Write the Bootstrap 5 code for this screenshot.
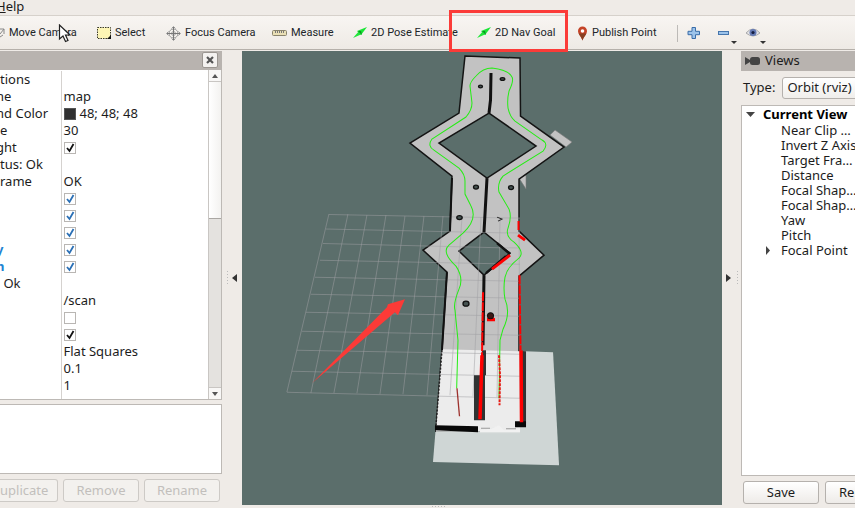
<!DOCTYPE html>
<html lang="en">
<head>
<meta charset="utf-8">
<meta name="viewport" content="width=device-width, initial-scale=1">
<title>RViz</title>
<link href="https://cdn.jsdelivr.net/npm/bootstrap@5.3.0/dist/css/bootstrap.min.css" rel="stylesheet">
<style>
body{font-family:"Noto Sans","Open Sans",sans-serif;font-size:13px;line-height:17px;color:#1c1c1c;background:#efebe7}
button,select{color:inherit}
.menubar{height:15px;line-height:13px;text-indent:-4px}
.menubar a{color:inherit}
.toolbar{height:36px;padding-top:2px;border-top:1px solid #d6d1cb;border-bottom:1px solid #b5b0aa;background:linear-gradient(#f8f5f2,#eeeae5);grid-template-columns:97px 69px 106px 81px 124px 100px 100px 10px 31px 28px 1fr}
.tool{font-family:Roboto,"Open Sans",sans-serif;font-size:11px;line-height:16px;gap:4px;white-space:nowrap}
.tool svg{flex:none}
.tool-sep{height:17px}
.cursor{left:58px;top:8px;z-index:3}
.highlight{left:-28px;top:-15px;width:119px;height:42px;border:3px solid #fb3b38;z-index:2}
.work{padding-top:1px}
.left-dock{width:222px;padding-bottom:3px}
.right-dock{width:114px}
.splitter{width:20px}
.splitter-right{width:19px}
.dock-title{height:20px;background:#b8b3af}
.views-title{gap:5px}
.close-btn{width:16px;height:16px;background:#f4f2f0;border:1px solid #9b9691;border-radius:2px}
.pane{background:#fff;border:1px solid #bdb9b5}
.props{table-layout:fixed;width:100%;margin-top:1px}
.props td{height:17px;padding:0 0 0 2px;white-space:nowrap;overflow:hidden}
.props td:first-child{width:61px;padding:0;border-right:1px solid #d5d2cf}
.props tr{height:17px}
.props .cut-name{text-indent:-4px}
.swatch{width:12px;height:12px;background:#303030;border:1px solid #555}
.tick{appearance:none;display:block;width:12px;height:12px;margin:0;background:#fff;border:1px solid #b9b6b3}
.tick:checked{background:#fff url("data:image/svg+xml,%3Csvg xmlns='http://www.w3.org/2000/svg' viewBox='0 0 10 10'%3E%3Cpath d='M2 5l2.5 3L8.5 1' fill='none' stroke='%23111' stroke-width='1.8'/%3E%3C/svg%3E")}
.tick.blue:checked{background-image:url("data:image/svg+xml,%3Csvg xmlns='http://www.w3.org/2000/svg' viewBox='0 0 10 10'%3E%3Cpath d='M2 5l2.5 3L8.5 1' fill='none' stroke='%232a6fb5' stroke-width='1.8'/%3E%3C/svg%3E")}
.blue-name{color:#2283d2;font-weight:700}
.scroller{width:13px;background:#e4e2df;border-left:1px solid #c9c6c3}
.scroll-btn{height:12px;background:#f8f7f6;border-bottom:1px solid #c9c6c3}
.scroll-btn.down{border-top:1px solid #c9c6c3;border-bottom:0}
.thumb{height:137px;background:linear-gradient(90deg,#fff,#f3f2f0);border-bottom:1px solid #aaa7a3}
.help-box{height:70px;margin-top:4px}
.cmd{width:76px;height:23px;flex:none;border:1px solid #b5b1ad;border-radius:3px;background:linear-gradient(#fff,#eeebe8);text-align:center}
.cmd.wide{width:110px;text-align:left;padding-left:13px}
.cmd:disabled{color:#c2bfbc;border-color:#cdcac6;background:#f3f1ee}
.cmd.cut{width:58px;text-align:left;border-left:0;border-radius:0 3px 3px 0}
.left-cmds{gap:5px;padding-top:5px}
.right-cmds{gap:6px;padding:5px 0 1px 2px}
.type-row{padding:6px 0 0 2px;gap:7px}
.type-select{width:120px;height:22px;flex:none;border:1px solid #b5b1ad;border-radius:3px;background:linear-gradient(#fff,#f0eeeb);appearance:none;padding:0 4px}
.views-tree{margin-top:6px;padding-top:1px;border-right:0}
.views-tree li{height:15px;line-height:15px;white-space:nowrap;padding-left:39px;position:relative}
.views-tree li.top{padding-left:21px;font-weight:700;color:#000;height:16px}
.views-tree svg{position:absolute;left:4px;top:5px}
.views-tree .nested{left:23px;top:3px}
.view3d{background:#5b6e6b}
.statusbar{height:3px}
</style>
</head>
<body class="d-flex flex-column vh-100 overflow-hidden">
<nav class="menubar overflow-hidden"><a href="#" class="text-decoration-none"><u>H</u>elp</a></nav>

<div class="toolbar d-grid align-items-center position-relative" role="toolbar">
  <button class="tool btn p-0 border-0 d-flex align-items-center rounded-0" type="button">
    <svg width="5" height="14"><path d="M0 3h4v5M4 3L0 8M0 11l3-2" fill="none" stroke="#888"/></svg>Move Camera</button>
  <button class="tool btn p-0 border-0 d-flex align-items-center rounded-0" type="button">
    <svg width="14" height="14"><path d="M.5 1.500h13v11H.5z" fill="#fdf5b5" stroke="#3a3a2a" stroke-dasharray="1.500 1"/><path d="M14 9v4h-4z" fill="#111"/></svg>Select</button>
  <button class="tool btn p-0 border-0 d-flex align-items-center rounded-0" type="button">
    <svg width="15" height="15" fill="none" stroke="#777"><circle cx="7.500" cy="7.500" r="4.500" stroke="#999"/><circle cx="7.500" cy="7.500" r="2" stroke="#aaa"/><path d="M7.500 1v13M1 7.500h13"/><path d="M5.500 2.500l2-2 2 2M5.500 12.500l2 2 2-2M2.500 5.500l-2 2 2 2M12.500 5.500l2 2-2 2" stroke="#999"/></svg>Focus Camera</button>
  <button class="tool btn p-0 border-0 d-flex align-items-center rounded-0" type="button">
    <svg width="15" height="14"><rect x=".5" y="4.500" width="14" height="5" rx="1" fill="#e9dfb5" stroke="#8a846c"/><path d="M3.500 5v2M5.500 5v2M7.500 5v2M9.500 5v2M11.500 5v2" stroke="#777"/></svg>Measure</button>
  <button class="tool btn p-0 border-0 d-flex align-items-center rounded-0" type="button">
    <svg width="14" height="14"><path d="M0 12L6 5l3 3z" fill="#21e63b"/><path d="M4 5l10-4-6 8z" fill="#19e535"/><path d="M5 5l4 4-1-4z" fill="#0a9420"/></svg>2D Pose Estimate</button>
  <div class="position-relative">
    <button class="tool btn p-0 border-0 d-flex align-items-center rounded-0" type="button">
      <svg width="14" height="14"><path d="M0 12L6 5l3 3z" fill="#21e63b"/><path d="M4 5l10-4-6 8z" fill="#19e535"/><path d="M5 5l4 4-1-4z" fill="#0a9420"/></svg>2D Nav Goal</button>
    <div class="highlight position-absolute"></div>
  </div>
  <button class="tool btn p-0 border-0 d-flex align-items-center rounded-0" type="button">
    <svg width="11" height="15"><path d="M5.500 14.500C4 10.500 1 8 1 5a4.500 4.500 0 0 1 9 0c0 3-3 5.500-4.500 9.500z" fill="#c44327"/><path d="M5.500 14.500C4.500 11 2.500 9 1.600 7.500h7.800C8 10 6.500 11 5.500 14.500z" fill="#874022"/><circle cx="5.500" cy="5" r="1.800" fill="#fff"/></svg>Publish Point</button>
  <div class="vr tool-sep align-self-center"></div>
  <button class="tool btn p-0 border-0 d-flex align-items-center rounded-0" type="button" aria-label="Add tool">
    <svg width="14" height="14"><path d="M5 1.500h3.500v3.800h4v3.400h-4v3.800H5V8.700H1V5.300h4z" fill="#9cc3ea" stroke="#3a6da8"/></svg></button>
  <button class="tool btn p-0 border-0 d-flex align-items-center rounded-0" type="button" aria-label="Remove tool">
    <svg width="20" height="22"><rect x=".5" y="9.500" width="10" height="3" fill="#9cc3ea" stroke="#4676ad"/><path d="M13 19h6l-3 3z" fill="#333"/></svg></button>
  <button class="tool btn p-0 border-0 d-flex align-items-center rounded-0" type="button" aria-label="Visibility">
    <svg width="20" height="22"><path d="M0 11Q7 3 14 11Q7 17 0 11z" fill="#e3e3e5" stroke="#a8a8aa"/><circle cx="7" cy="10.500" r="3.500" fill="#6379b4"/><circle cx="7" cy="10.500" r="1.600" fill="#141d40"/><path d="M14 19h6l-3 3z" fill="#333"/></svg></button>
  <svg class="cursor position-absolute" width="14" height="20"><path d="M1.500 1v14l3.500-3 2.500 5.500 2.500-1-2.500-5.500H12z" fill="#fff" stroke="#222" stroke-width="1.200"/></svg>
</div>

<main class="work d-flex flex-grow-1 overflow-hidden">
  <section class="left-dock d-flex flex-column flex-shrink-0">
    <div class="dock-title d-flex align-items-center justify-content-end">
      <button class="close-btn btn p-0 d-flex align-items-center justify-content-center me-1" type="button" aria-label="Close"><svg width="8" height="8"><path d="M1 1l6 6M7 1L1 7" stroke="#555" stroke-width="2.200"/></svg></button>
    </div>
    <div class="pane d-flex border-start-0 border-top-0 flex-grow-1 overflow-hidden">
      <div class="flex-grow-1 overflow-hidden">
      <table class="props">
        <tr><td>tions</td><td></td></tr>
        <tr><td class="cut-name">ne</td><td>map</td></tr>
        <tr><td class="cut-name">nd Color</td><td><div class="d-flex align-items-center gap-1"><span class="swatch"></span>48; 48; 48</div></td></tr>
        <tr><td>e</td><td>30</td></tr>
        <tr><td class="cut-name">ght</td><td><input class="tick" type="checkbox" checked aria-label="Default Light"></td></tr>
        <tr><td>tus: Ok</td><td></td></tr>
        <tr><td>rame</td><td>OK</td></tr>
        <tr><td></td><td><input class="tick blue" type="checkbox" checked aria-label="Display 1"></td></tr>
        <tr><td></td><td><input class="tick blue" type="checkbox" checked aria-label="Display 2"></td></tr>
        <tr><td></td><td><input class="tick blue" type="checkbox" checked aria-label="Display 3"></td></tr>
        <tr><td class="blue-name cut-name">y</td><td><input class="tick blue" type="checkbox" checked aria-label="Display 4"></td></tr>
        <tr><td class="blue-name cut-name">n</td><td><input class="tick blue" type="checkbox" checked aria-label="Display 5"></td></tr>
        <tr><td>&nbsp;Ok</td><td></td></tr>
        <tr><td></td><td>/scan</td></tr>
        <tr><td></td><td><input class="tick" type="checkbox" aria-label="Unreliable"></td></tr>
        <tr><td></td><td><input class="tick" type="checkbox" checked aria-label="Selectable"></td></tr>
        <tr><td></td><td>Flat Squares</td></tr>
        <tr><td></td><td>0.1</td></tr>
        <tr><td></td><td>1</td></tr>
        <tr><td></td><td></td></tr>
      </table>
      </div>
      <div class="scroller d-flex flex-column flex-shrink-0">
        <div class="scroll-btn d-flex align-items-center justify-content-center"><svg width="6" height="4"><path d="M0 4l3-4 3 4z" fill="#555"/></svg></div>
        <div class="thumb"></div>
        <div class="scroll-btn down d-flex align-items-center justify-content-center mt-auto"><svg width="6" height="4"><path d="M0 0l3 4 3-4z" fill="#555"/></svg></div>
      </div>
    </div>
    <div class="pane help-box border-start-0 flex-shrink-0"></div>
    <div class="left-cmds d-flex">
      <button class="cmd cut p-0" type="button" disabled>uplicate</button>
      <button class="cmd p-0" type="button" disabled>Remove</button>
      <button class="cmd p-0" type="button" disabled>Rename</button>
    </div>
  </section>

  <div class="splitter d-flex align-items-center justify-content-center flex-shrink-0"><svg width="14" height="16"><path d="M2.500 1v15" stroke="#bbb" stroke-dasharray="1 2"/><path d="M12 4v8L7 8z" fill="#333"/></svg></div>

  <section class="view3d flex-grow-1 overflow-hidden">
    <svg class="d-block w-100 h-100" viewBox="242 51 480 454" preserveAspectRatio="xMidYMid slice" role="img" aria-label="Map with planned path">
      <g fill="#c2c2c2" stroke="#777" stroke-width=".6">
        <path d="M555 130l17 12-6 5-16-12z"/><path d="M519 178l7-3v14z"/>
      </g>
      <path d="M433 461.700L436 425 525 351l28 1 6 113z" fill="#cfd6d5"/>
      <path fill-rule="evenodd" fill="#c2c2c2" stroke="#141414" stroke-width="1.500" d="M465 56l55 2 .5 58L564 147l-45 32v52l25 24-25 21v155H436l6-81 5-78-24-22 27-19 2-55-42-33 49-30zM489 113l-50 30 48 35 49-32zM484 232l-25 19 25 24 26-22z"/>
      <path d="M442 349l78 2v80H436z" fill="#ececec"/>
      <path d="M436 431h44l19-5 4 5h17v2h-40v-1h-44z" fill="#d5dad9"/>
      <g fill="none" stroke="#a0a0a4" stroke-opacity=".5" stroke-width="1">
        <path d="M329 214.500L520 218M326 229l194 4M323 243.500L520 248M320 260l200 4M315 277l205 4M311 294l209 4M306 312l214 4M302 331l218 4M297 350l223 4M292 371l228 5M287 392l233 6"/>
        <path d="M329 214l-42 178M348 214l-37 179M367 215l-33 178M386 215l-29 178M405 216l-25 178M424 216l-21 178M443 216l-16 179M462 217l-12 178M481 217l-8 179M500 218l-3 179M519 218l1 180"/>
      </g>
      <path d="M491 73l-.5 27-1.500 13M487 178l-3 54M484 275l-1 70" fill="none" stroke="#111" stroke-width="3"/>
      <path d="M452 178l-2 53M447 272l-5 78" stroke="#111" stroke-width="2" fill="none"/>
      <path d="M442 350l-6 75" stroke="#222" stroke-width="1.500" stroke-dasharray="2 1.500"/>
      <path d="M482 350h4v25h-1v45H474v-45h8zM522 351h4v72h-4z" fill="#303333"/>
      <path d="M435 425l43 1v6l-43-2zM515 421h11v6h-11z" fill="#080808"/>
      <path d="M480 430l12-2 7-3 5 5 16-1v3h-40z" fill="#f1f1f1"/>
      <path d="M481 428h9M506 428.500h10" stroke="#999" stroke-width="1" fill="none"/>
      <path d="M497 243l13 11M506 256l-20 17" stroke="#111" stroke-width="2.500" fill="none"/>
      <g fill="#455250" stroke="#111" stroke-width="1.300">
        <ellipse cx="480.500" cy="86.500" rx="2" ry="1.300"/><ellipse cx="502.500" cy="79" rx="2.300" ry="1.400"/>
        <ellipse cx="476" cy="187" rx="2.500" ry="2"/><ellipse cx="511" cy="187.500" rx="2.500" ry="2"/>
        <ellipse cx="459.500" cy="217.500" rx="2.700" ry="2"/><ellipse cx="466" cy="303.500" rx="3" ry="2.500"/>
      </g>
      <path d="M497 217l5 2-4 2" stroke="#222" fill="none"/>
      <path d="M456.700 388L458 340 455 310Q453 304 459 289Q464 278 456 266Q441 252 449 245L463 233Q478 219 471 206L465 194V181Q465 174 459 168L434 150Q427 146 432 139L466 117Q472 110 472 103L470 86Q470 82 476 76Q483 68 492 68Q509 70 512 77Q514 81 509 91Q507 99 508 108Q510 117 515 121L542 140Q549 144 543 151L503 176Q497 183 499 192L509 209Q512 217 508 228Q505 236 514 242Q525 252 519 258Q507 267 505 277Q503 288 505 299Q511 313 503 329L500 340 499 398" fill="none" stroke="#24ee13" stroke-width="1"/>
      <path d="M457 388l2.500 28" stroke="#9d302c" stroke-width="1.300"/>
      <path d="M499 355l1 20-.5 30" stroke="#e51a12" stroke-width="2" stroke-dasharray="3 1" fill="none"/>
      <g stroke="#f00" fill="none">
        <path d="M483 292l-1 65M519.500 275l1 75M518.500 221v10" stroke-width="2" stroke-dasharray="9 1"/>
        <path d="M482 355l-2 64M521 350l.5 72" stroke-width="3.500"/>
        <path d="M510 255l-18 14M518 235l7 5" stroke-width="3"/>
      </g>
      <path d="M487 318q3-3 8 0v3h-8z" fill="#f00"/><circle cx="490.500" cy="315.500" r="3" fill="#3c1815" stroke="#111"/>
      <path d="M312 383L387 307 388 304 405 299 398 315 395 312 312 383z" fill="#fc3a37"/>
    </svg>
  </section>

  <div class="splitter-right d-flex align-items-center flex-shrink-0"><svg width="19" height="16"><path d="M4 4v8l5-4z" fill="#333"/><path d="M15.500 1v15" stroke="#bbb" stroke-dasharray="1 2"/></svg></div>

  <section class="right-dock d-flex flex-column flex-shrink-0 overflow-hidden">
    <div class="dock-title views-title d-flex align-items-center ps-1"><svg width="15" height="10"><path d="M0 1l5 3v2L0 9z" fill="#444"/><rect x="5" y="1" width="10" height="8" rx="2.500" fill="#444"/></svg><span>Views</span></div>
    <div class="type-row d-flex align-items-center">
      <label for="viewType">Type:</label>
      <select id="viewType" class="type-select"><option>Orbit (rviz)</option></select>
    </div>
    <ul class="pane views-tree list-unstyled mb-0 flex-grow-1 overflow-hidden">
      <li class="top"><svg width="9" height="6"><path d="M0 0h9L4.500 5z" fill="#444"/></svg>Current View</li>
      <li>Near Clip …</li>
      <li>Invert Z Axis</li>
      <li>Target Fra…</li>
      <li>Distance</li>
      <li>Focal Shap…</li>
      <li>Focal Shap…</li>
      <li>Yaw</li>
      <li>Pitch</li>
      <li><svg class="nested" width="6" height="9"><path d="M1 0v9l4-4.500z" fill="#444"/></svg>Focal Point</li>
    </ul>
    <div class="right-cmds d-flex flex-shrink-0">
      <button class="cmd p-0" type="button">Save</button>
      <button class="cmd wide" type="button">Remove</button>
    </div>
  </section>
</main>
<footer class="statusbar d-flex justify-content-center ps-4"><svg width="15" height="3"><path d="M0 1.500h15" stroke="#bbb" stroke-dasharray="1 2"/></svg></footer>
<script src="https://cdn.jsdelivr.net/npm/bootstrap@5.3.0/dist/js/bootstrap.bundle.min.js"></script>
</body>
</html>
